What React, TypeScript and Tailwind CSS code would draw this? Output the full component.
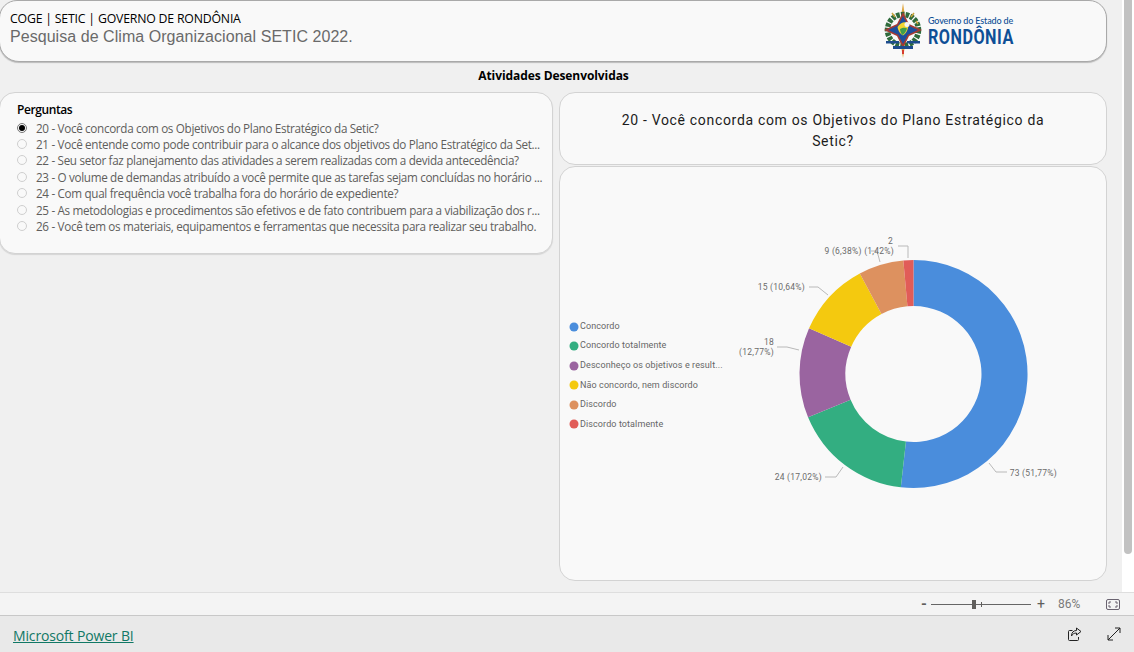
const questions = [
  "20 - Você concorda com os Objetivos do Plano Estratégico da Setic?",
  "21 - Você entende como pode contribuir para o alcance dos objetivos do Plano Estratégico da Set...",
  "22 - Seu setor faz planejamento das atividades a serem realizadas com a devida antecedência?",
  "23 - O volume de demandas atribuído a você permite que as tarefas sejam concluídas no horário ...",
  "24 - Com qual frequência você trabalha fora do horário de expediente?",
  "25 - As metodologias e procedimentos são efetivos e de fato contribuem para a viabilização dos r...",
  "26 - Você tem os materiais, equipamentos e ferramentas que necessita para realizar seu trabalho.",
];

const slices = [
  { name: "Concordo", v: 73, c: "#4a8ddc" },
  { name: "Concordo totalmente", v: 24, c: "#33ae81" },
  { name: "Desconheço os objetivos e result...", v: 18, c: "#9a64a0" },
  { name: "Não concordo, nem discordo", v: 15, c: "#f4c90f" },
  { name: "Discordo", v: 9, c: "#dd915f" },
  { name: "Discordo totalmente", v: 2, c: "#e15c58" },
];

const CX = 913.5;
const CY = 374;
const RO = 114;
const RI = 68;

function arc(a0: number, a1: number) {
  const p = (r: number, a: number) =>
    `${(CX + r * Math.sin(a)).toFixed(2)} ${(CY - r * Math.cos(a)).toFixed(2)}`;
  const large = a1 - a0 > Math.PI ? 1 : 0;
  return `M${p(RO, a0)}A${RO} ${RO} 0 ${large} 1 ${p(RO, a1)}L${p(RI, a1)}A${RI} ${RI} 0 ${large} 0 ${p(RI, a0)}Z`;
}

function Donut() {
  let acc = 0;
  const total = 141;
  const labelFont = { fontFamily: "Roboto, sans-serif", fontSize: 8.5, letterSpacing: 0.25 };
  const labels: [number, number, string][] = [
    [1057, 476, "73 (51,77%)"],
    [822, 480, "24 (17,02%)"],
    [774, 345, "18"],
    [774, 355, "(12,77%)"],
    [805, 290, "15 (10,64%)"],
    [894, 254, "9 (6,38%) (1,42%)"],
    [893, 244, "2"],
  ];
  const leaders = [
    "M989 463l7 9h11",
    "M843 467l-7 10h-11",
    "M799 350l-12-3h-10",
    "M828 295l-10-8h-9",
    "M880 262l-3-11h-6",
    "M908 258V246h-10",
  ];
  return (
    <svg viewBox="725 168 380 412" width={380} height={412} className="shrink-0">
      {slices.map((s) => {
        const a0 = (acc / total) * Math.PI * 2;
        acc += s.v;
        const a1 = (acc / total) * Math.PI * 2;
        return <path key={s.name} d={arc(a0, a1)} fill={s.c} />;
      })}
      {leaders.map((d) => (
        <path key={d} d={d} fill="none" stroke="#b9b9b9" strokeWidth={1} />
      ))}
      {labels.map(([x, y, t]) => (
        <text key={t} x={x} y={y} textAnchor="end" fill="#6b6b6b" style={labelFont}>
          {t}
        </text>
      ))}
    </svg>
  );
}

function Emblem() {
  return (
    <svg viewBox="0 0 40 56" width={40} height={56} className="shrink-0">
      <path d="M20 0l1.800 12v32L20 55l-1.800-11V12z" fill="#e0a63f" />
      <circle cx="20" cy="27" r="15.500" fill="none" stroke="#2f6b3c" strokeWidth="5.500" strokeDasharray="3.500 1.200" />
      <path d="M9 10l3 4M31 10l-3 4M33 18l2 3" stroke="#c9a23a" strokeWidth="1.500" />
      <path d="M20 9l6 12 13 6-13 6-6 12-6-12-13-6 13-6z" fill="#a33b34" />
      <path d="M20 13l4.800 9.200L35 27l-10.200 4.800L20 41l-4.800-9.200L5 27l10.200-4.800z" fill="#1c4f9d" />
      <path d="M14.500 24c3-5 8-6 11-3.500 0 5-2 10-5.500 12-3-1.500-5-5-5.500-8.500z" fill="#f2d532" />
      <path d="M17 26c3-2 6-1.500 7-.5-1 3-2.500 5.500-4.500 6.500-1.500-1.500-2.500-4-2.500-6z" fill="#3f9e4d" />
      <circle cx="24" cy="21.500" r="2.500" fill="#f5f5f5" />
      <path d="M3 38h13v2.500H3zM24 38h13v2.500H24z" fill="#1d4c8e" />
      <path d="M10 43h20v3H10z" fill="#1d4c8e" />
      <path d="M19 47h2v4h-2z" fill="#d63c2e" />
    </svg>
  );
}

export default function App() {
  return (
    <div className="w-[1134px] h-[652px] overflow-hidden flex flex-col bg-[#f0f0f0] font-['Roboto',sans-serif]">
      <div className="h-[592px] flex">
        <main className="w-[1122px] flex flex-col pr-[15px] bg-[#f0f0f0]">
          <header className="ml-[-1px] h-[62px] rounded-b-[20px] rounded-t-[18px] border border-[#a9a9a9] bg-[#f9f9f9] flex items-center justify-between pl-[10px] pr-[93px] shadow-[0_1px_1px_#bbbbbb]">
            <div className="flex flex-col pb-[5px]">
              <span className="text-[12.300px] leading-[16px] text-black font-medium font-['Open_Sans',sans-serif] tracking-[-0.2px]">COGE | SETIC | GOVERNO DE RONDÔNIA</span>
              <span className="text-[16px] leading-[20px] text-[#6a6a6a] font-['Liberation_Sans',sans-serif] tracking-[0.05px]">Pesquisa de Clima Organizacional SETIC 2022.</span>
            </div>
            <div className="flex items-center gap-[5px]">
              <Emblem />
              <div className="flex flex-col w-[85px] text-[#0e4f96]">
                <span className="text-[9px] leading-[12px] whitespace-nowrap font-['Lato',sans-serif] font-medium tracking-[-0.15px]">Governo do Estado de</span>
                <span className="text-[20px] leading-[21px] whitespace-nowrap origin-left scale-x-[0.81] font-['Roboto',sans-serif] font-bold tracking-[0.6px]">RONDÔNIA</span>
              </div>
            </div>
          </header>
          <h1 className="h-[27px] mb-[3px] flex items-center justify-center text-[12px] font-bold text-black font-['Open_Sans',sans-serif] tracking-[-0.08px]">
            Atividades Desenvolvidas
          </h1>
          <div className="flex gap-[6px] h-[489px]">
            <section className="ml-[-1px] w-[554px] h-[162px] rounded-[16px] border border-[#d3d3d3] bg-[#f9f9f9] pl-[17px] pt-[9px] shadow-[0_1px_1px_#d5d5d5]">
              <h2 className="text-[12px] leading-[15px] font-semibold text-black font-['Open_Sans',sans-serif] tracking-[-0.4px]">Perguntas</h2>
              <ul className="mt-[2.500px]">
                {questions.map((q, i) => (
                  <li key={q} className="h-[16.400px] flex items-center gap-[9px]">
                    <span
                      className={
                        i === 0
                          ? "w-[10px] h-[10px] rounded-full border border-[#777777] bg-[#f9f9f9] flex items-center justify-center shrink-0"
                          : "w-[10px] h-[10px] rounded-full border border-[#cfcfcf] bg-[#f9f9f9] shrink-0"
                      }
                    >
                      {i === 0 && <span className="w-[6px] h-[6px] rounded-full bg-black" />}
                    </span>
                    <span className="text-[11.700px] leading-[16px] text-[#605e5c] whitespace-nowrap font-['Open_Sans',sans-serif] tracking-[-0.33px]">{q}</span>
                  </li>
                ))}
              </ul>
            </section>
            <div className="w-[548px] flex flex-col gap-[1px]">
              <div className="h-[73px] rounded-[16px] border border-[#d3d3d3] bg-[#f9f9f9] flex items-center justify-center pt-[4px]">
                <p className="w-[436px] text-center text-[14px] leading-[21px] text-[#1c1c1c] font-['Roboto',sans-serif] tracking-[0.68px]">
                  20 - Você concorda com os Objetivos do Plano Estratégico da Setic?
                </p>
              </div>
              <div className="h-[415px] rounded-[16px] border border-[#d3d3d3] bg-[#f9f9f9] flex items-center">
                <ul className="w-[165px] pl-[9px] shrink-0 flex flex-col gap-[5.600px] mt-[4px]">
                  {slices.map((s) => (
                    <li key={s.name} className="h-[14px] flex items-center gap-[1px] whitespace-nowrap text-[9px] text-[#666666] tracking-[0.1px]">
                      <svg width={10} height={10} viewBox="0 0 10 10" className="shrink-0">
                        <circle cx="5" cy="5" r="4.500" fill={s.c} />
                      </svg>
                      {s.name}
                    </li>
                  ))}
                </ul>
                <Donut />
              </div>
            </div>
          </div>
        </main>
        <aside className="w-[12px] flex flex-col bg-white">
          <div className="ml-[2px] w-[8px] h-[554px] rounded-b-[4px] bg-[#c2c2c2]" />
        </aside>
      </div>
      <div className="h-[24px] border-y border-[#dedede] border-b-[#c8c8c8] bg-[#f4f4f4] flex items-center justify-end text-[#605e5c]">
        <span className="text-[15px] font-bold leading-none w-[6px]">-</span>
        <div className="relative ml-[4px] w-[100px] h-[1px] bg-[#666666]">
          <span className="absolute left-[41px] top-[-4px] w-[4px] h-[9px] bg-[#605e5c]" />
          <span className="absolute left-[50px] top-[-2px] w-[1px] h-[5px] bg-[#605e5c]" />
        </div>
        <span className="ml-[6px] text-[14px] leading-none">+</span>
        <span className="ml-[13px] w-[31px] text-[12px] text-[#7a7a7a]">86%</span>
        <svg width={14} height={11} viewBox="0 0 14 11" fill="none" className="ml-[17px] mr-[14px]">
          <rect x="0.500" y="0.500" width="13" height="10" rx="1.500" stroke="#6a6370" />
          <path d="M3 5V3h2M9 3h2v2M3 6v2h2M9 8h2V6" stroke="#6a6370" />
        </svg>
      </div>
      <footer className="flex-1 bg-[#e9e9e9] flex items-center justify-between pl-[13px] pr-[13px] pt-[2px] border-t border-[#c8c8c8] -mt-px">
        <a href="#" className="text-[14px] text-[#117865] underline font-medium font-['Open_Sans',sans-serif] tracking-[-0.15px]">Microsoft Power BI</a>
        <div className="flex items-center gap-[25px] pb-[2px]">
          <svg width={14} height={14} viewBox="0 0 14 14" fill="none" stroke="#222222">
            <path d="M4.500 3.500H1.500a1 1 0 0 0-1 1v8a1 1 0 0 0 1 1h8a1 1 0 0 0 1-1V10" />
            <path d="M8.500 1l4.500 3.500L8.500 8V6C6 6 4.500 7 3.500 9c0-3.500 2-5.500 5-5.500z" />
          </svg>
          <svg width={14} height={14} viewBox="0 0 14 14" fill="none" stroke="#222222">
            <path d="M1 13L13 1M8 1h5v5M1 8v5h5" />
          </svg>
        </div>
      </footer>
    </div>
  );
}
